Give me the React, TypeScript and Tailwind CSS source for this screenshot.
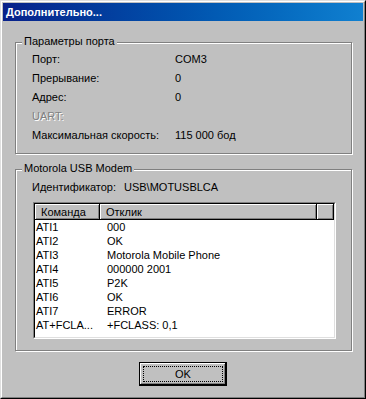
export default function App() {
  const rows: [string, string][] = [
    ["ATI1", "000"],
    ["ATI2", "OK"],
    ["ATI3", "Motorola Mobile Phone"],
    ["ATI4", "000000 2001"],
    ["ATI5", "P2K"],
    ["ATI6", "OK"],
    ["ATI7", "ERROR"],
    ["AT+FCLA...", "+FCLASS: 0,1"],
  ];
  const params: [string, string, boolean][] = [
    ["Порт:", "COM3", false],
    ["Прерывание:", "0", false],
    ["Адрес:", "0", false],
    ["UART:", "", true],
    ["Максимальная скорость:", "115 000 бод", false],
  ];
  const hdr =
    "h-full bg-[#c0c0c0] shadow-[inset_-1px_-1px_0_#000,inset_1px_1px_0_#fff,inset_-2px_-2px_0_#808080]";
  return (
    <div className="w-[366px] h-[399px] bg-[#c0c0c0] border border-t-[#dfdfdf] border-l-[#dfdfdf] border-r-black border-b-black text-[11px] text-black font-['Liberation_Sans',Arial,sans-serif]">
      <div className="h-full border border-t-white border-l-white border-r-[#808080] border-b-[#808080] p-[1px] flex flex-col">
        <div className="h-[18px] bg-linear-to-r from-[#08208a] to-[#1080d0] flex items-center pl-[3px] text-white font-bold text-[11px] leading-[18px]">
          Дополнительно...
        </div>
        <div className="pl-[12px] flex flex-col">
          {/* Group 1 */}
          <div className="relative mt-[21px] w-[337px] border border-[#808080] shadow-[inset_1px_1px_0_#fff,1px_1px_0_#fff] pt-[7px] pb-[8px] pl-[16px]">
            <span className="absolute left-[6px] top-[-8px] px-[2px] bg-[#c0c0c0] leading-[13px]">
              Параметры порта
            </span>
            {params.map(([l, v, dis]) => (
              <div key={l} className="flex h-[19px] leading-[19px]">
                <div
                  className={
                    dis
                      ? "w-[143px] text-[#808080] [text-shadow:1px_1px_0_#fff]"
                      : "w-[143px]"
                  }
                >
                  {l}
                </div>
                <div>{v}</div>
              </div>
            ))}
          </div>
          {/* Group 2 */}
          <div className="relative mt-[15px] w-[337px] border border-[#808080] shadow-[inset_1px_1px_0_#fff,1px_1px_0_#fff] pt-[8px] pb-[11px] pl-[17px]">
            <span className="absolute left-[6px] top-[-8px] px-[2px] bg-[#c0c0c0] leading-[13px]">
              Motorola USB Modem
            </span>
            <div className="flex h-[19px] leading-[19px] pl-[-1px]">
              <div className="w-[92px] -ml-[1px]">Идентификатор:</div>
              <div>USB\MOTUSBLCA</div>
            </div>
            <div className="mt-[5px] w-[303px] h-[137px] border border-t-[#808080] border-l-[#808080] border-r-white border-b-white">
              <div className="h-full border border-t-black border-l-black border-r-[#dfdfdf] border-b-[#dfdfdf] bg-white">
                <div className="flex h-[16px] leading-[16px]">
                  <div className="w-[65px]">
                    <div className={hdr + " pl-[6px]"}>Команда</div>
                  </div>
                  <div className="w-[217px]">
                    <div className={hdr + " pl-[6px]"}>Отклик</div>
                  </div>
                  <div className="flex-1">
                    <div className={hdr}></div>
                  </div>
                </div>
                {rows.map(([c, r], i) => (
                  <div key={i} className="flex h-[14px] leading-[14px]">
                    <div className="w-[65px] pl-[1px]">{c}</div>
                    <div className="pl-[7px]">{r}</div>
                  </div>
                ))}
              </div>
            </div>
          </div>
        </div>
        <div className="mt-[11px] flex justify-center">
          <div className="w-[88px] h-[24px] border border-black">
            <div className="h-full p-[3px] shadow-[inset_-1px_-1px_0_#000,inset_1px_1px_0_#fff,inset_-2px_-2px_0_#808080]">
              <div className="h-full border border-dotted border-black flex items-center justify-center leading-[14px]">
                OK
              </div>
            </div>
          </div>
        </div>
      </div>
    </div>
  );
}
